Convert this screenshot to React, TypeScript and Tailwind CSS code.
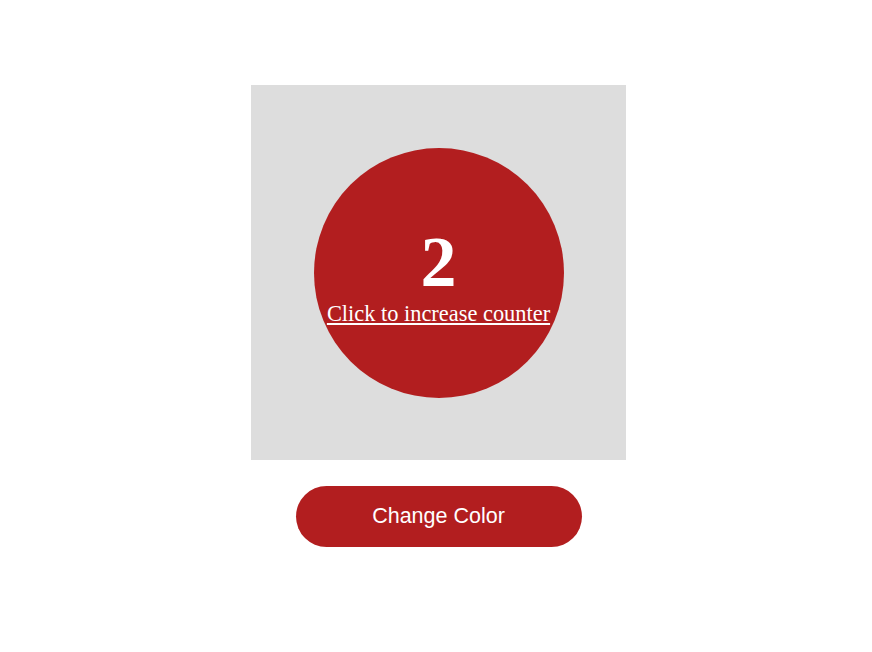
import React, { useState } from "react";

export default function App() {
  const [count, setCount] = useState(2);
  return (
    <div className="min-h-[652px] w-full bg-white flex flex-col items-center pt-[85px] pl-[5px]">
      <div className="w-[375px] h-[375px] bg-[#dddddd] flex items-center justify-center">
        <div
          className="w-[250px] h-[250px] rounded-full bg-[#b21e1f] flex flex-col items-center justify-center text-white cursor-pointer"
          style={{ fontFamily: '"Liberation Serif", "Times New Roman", serif' }}
          onClick={() => setCount(count + 1)}
        >
          <div className="text-[72px] font-bold leading-none mt-[9px]" style={{ fontWeight: 700 }}>
            {count}
          </div>
          <div className="text-[22.4px] underline leading-tight mt-[2px] whitespace-nowrap">
            Click to increase counter
          </div>
        </div>
      </div>
      <button
        className="mt-[26px] w-[286px] h-[61px] rounded-full bg-[#b21e1f] text-white text-[21.5px]"
        style={{ fontFamily: '"Liberation Sans", Arial, sans-serif' }}
      >
        Change Color
      </button>
    </div>
  );
}
